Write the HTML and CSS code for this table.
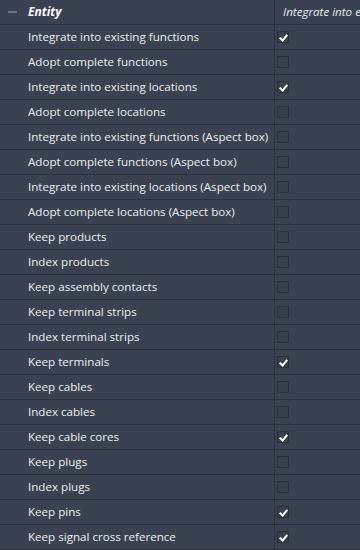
FILE: index.html
```html
<!DOCTYPE html>
<html lang="en">
<head>
<meta charset="utf-8">
<title>Entity settings</title>
<link rel="stylesheet" href="styles.css">
</head>
<body>
<div class="grid">
  <div class="row head">
    <div class="cell name"><span class="collapse"></span><span class="title">Entity</span></div>
    <div class="cell val"><span class="coltitle">Integrate into existing functions</span></div>
  </div>
  <div class="row"><div class="cell name">Integrate into existing functions</div><div class="cell val"><span class="box on"></span></div></div>
  <div class="row"><div class="cell name">Adopt complete functions</div><div class="cell val"><span class="box"></span></div></div>
  <div class="row"><div class="cell name">Integrate into existing locations</div><div class="cell val"><span class="box on"></span></div></div>
  <div class="row"><div class="cell name">Adopt complete locations</div><div class="cell val"><span class="box"></span></div></div>
  <div class="row"><div class="cell name">Integrate into existing functions (Aspect box)</div><div class="cell val"><span class="box"></span></div></div>
  <div class="row"><div class="cell name">Adopt complete functions (Aspect box)</div><div class="cell val"><span class="box"></span></div></div>
  <div class="row"><div class="cell name">Integrate into existing locations (Aspect box)</div><div class="cell val"><span class="box"></span></div></div>
  <div class="row"><div class="cell name">Adopt complete locations (Aspect box)</div><div class="cell val"><span class="box"></span></div></div>
  <div class="row"><div class="cell name">Keep products</div><div class="cell val"><span class="box"></span></div></div>
  <div class="row"><div class="cell name">Index products</div><div class="cell val"><span class="box"></span></div></div>
  <div class="row"><div class="cell name">Keep assembly contacts</div><div class="cell val"><span class="box"></span></div></div>
  <div class="row"><div class="cell name">Keep terminal strips</div><div class="cell val"><span class="box"></span></div></div>
  <div class="row"><div class="cell name">Index terminal strips</div><div class="cell val"><span class="box"></span></div></div>
  <div class="row"><div class="cell name">Keep terminals</div><div class="cell val"><span class="box on"></span></div></div>
  <div class="row"><div class="cell name">Keep cables</div><div class="cell val"><span class="box"></span></div></div>
  <div class="row"><div class="cell name">Index cables</div><div class="cell val"><span class="box"></span></div></div>
  <div class="row"><div class="cell name">Keep cable cores</div><div class="cell val"><span class="box on"></span></div></div>
  <div class="row"><div class="cell name">Keep plugs</div><div class="cell val"><span class="box"></span></div></div>
  <div class="row"><div class="cell name">Index plugs</div><div class="cell val"><span class="box"></span></div></div>
  <div class="row"><div class="cell name">Keep pins</div><div class="cell val"><span class="box on"></span></div></div>
  <div class="row"><div class="cell name">Keep signal cross reference</div><div class="cell val"><span class="box on"></span></div></div>
</div>
</body>
</html>
```
FILE: styles.css
```css
html, body {
  margin: 0;
  padding: 0;
  background: #3a4150;
}
body {
  width: 360px;
  height: 550px;
  overflow: hidden;
  font-family: "Open Sans", "Noto Sans", sans-serif;
  font-size: 11.6px;
  color: #eceef2;
}
.grid {
  display: flex;
  flex-direction: column;
}
.row {
  display: grid;
  grid-template-columns: 275px 1fr;
  height: 25px;
  box-sizing: border-box;
  border-bottom: 1px solid #2c313c;
}
.cell {
  display: flex;
  align-items: center;
  overflow: hidden;
  white-space: nowrap;
}
.name {
  padding-left: 28px;
  padding-bottom: 1px;
  border-right: 1px solid #2c313c;
}
.val {
  padding-left: 2px;
  padding-bottom: 1px;
}
.head .name {
  padding-left: 8px;
}
.collapse {
  width: 9px;
  height: 2px;
  background: #6b7280;
  margin-right: 11px;
}
.title {
  font-weight: bold;
  font-style: italic;
  font-size: 12px;
  color: #ffffff;
}
.coltitle {
  font-style: italic;
  padding-left: 6px;
  color: #e8eaee;
}
.box {
  width: 12px;
  height: 12px;
  box-sizing: border-box;
  border: 1px solid #2a2f39;
  background: #383f4d;
  border-radius: 1px;
  position: relative;
}
.box.on::after {
  content: "";
  position: absolute;
  left: 3px;
  top: 1px;
  width: 3px;
  height: 6px;
  border: solid #ffffff;
  border-width: 0 2px 2px 0;
  transform: rotate(40deg);
}
```
